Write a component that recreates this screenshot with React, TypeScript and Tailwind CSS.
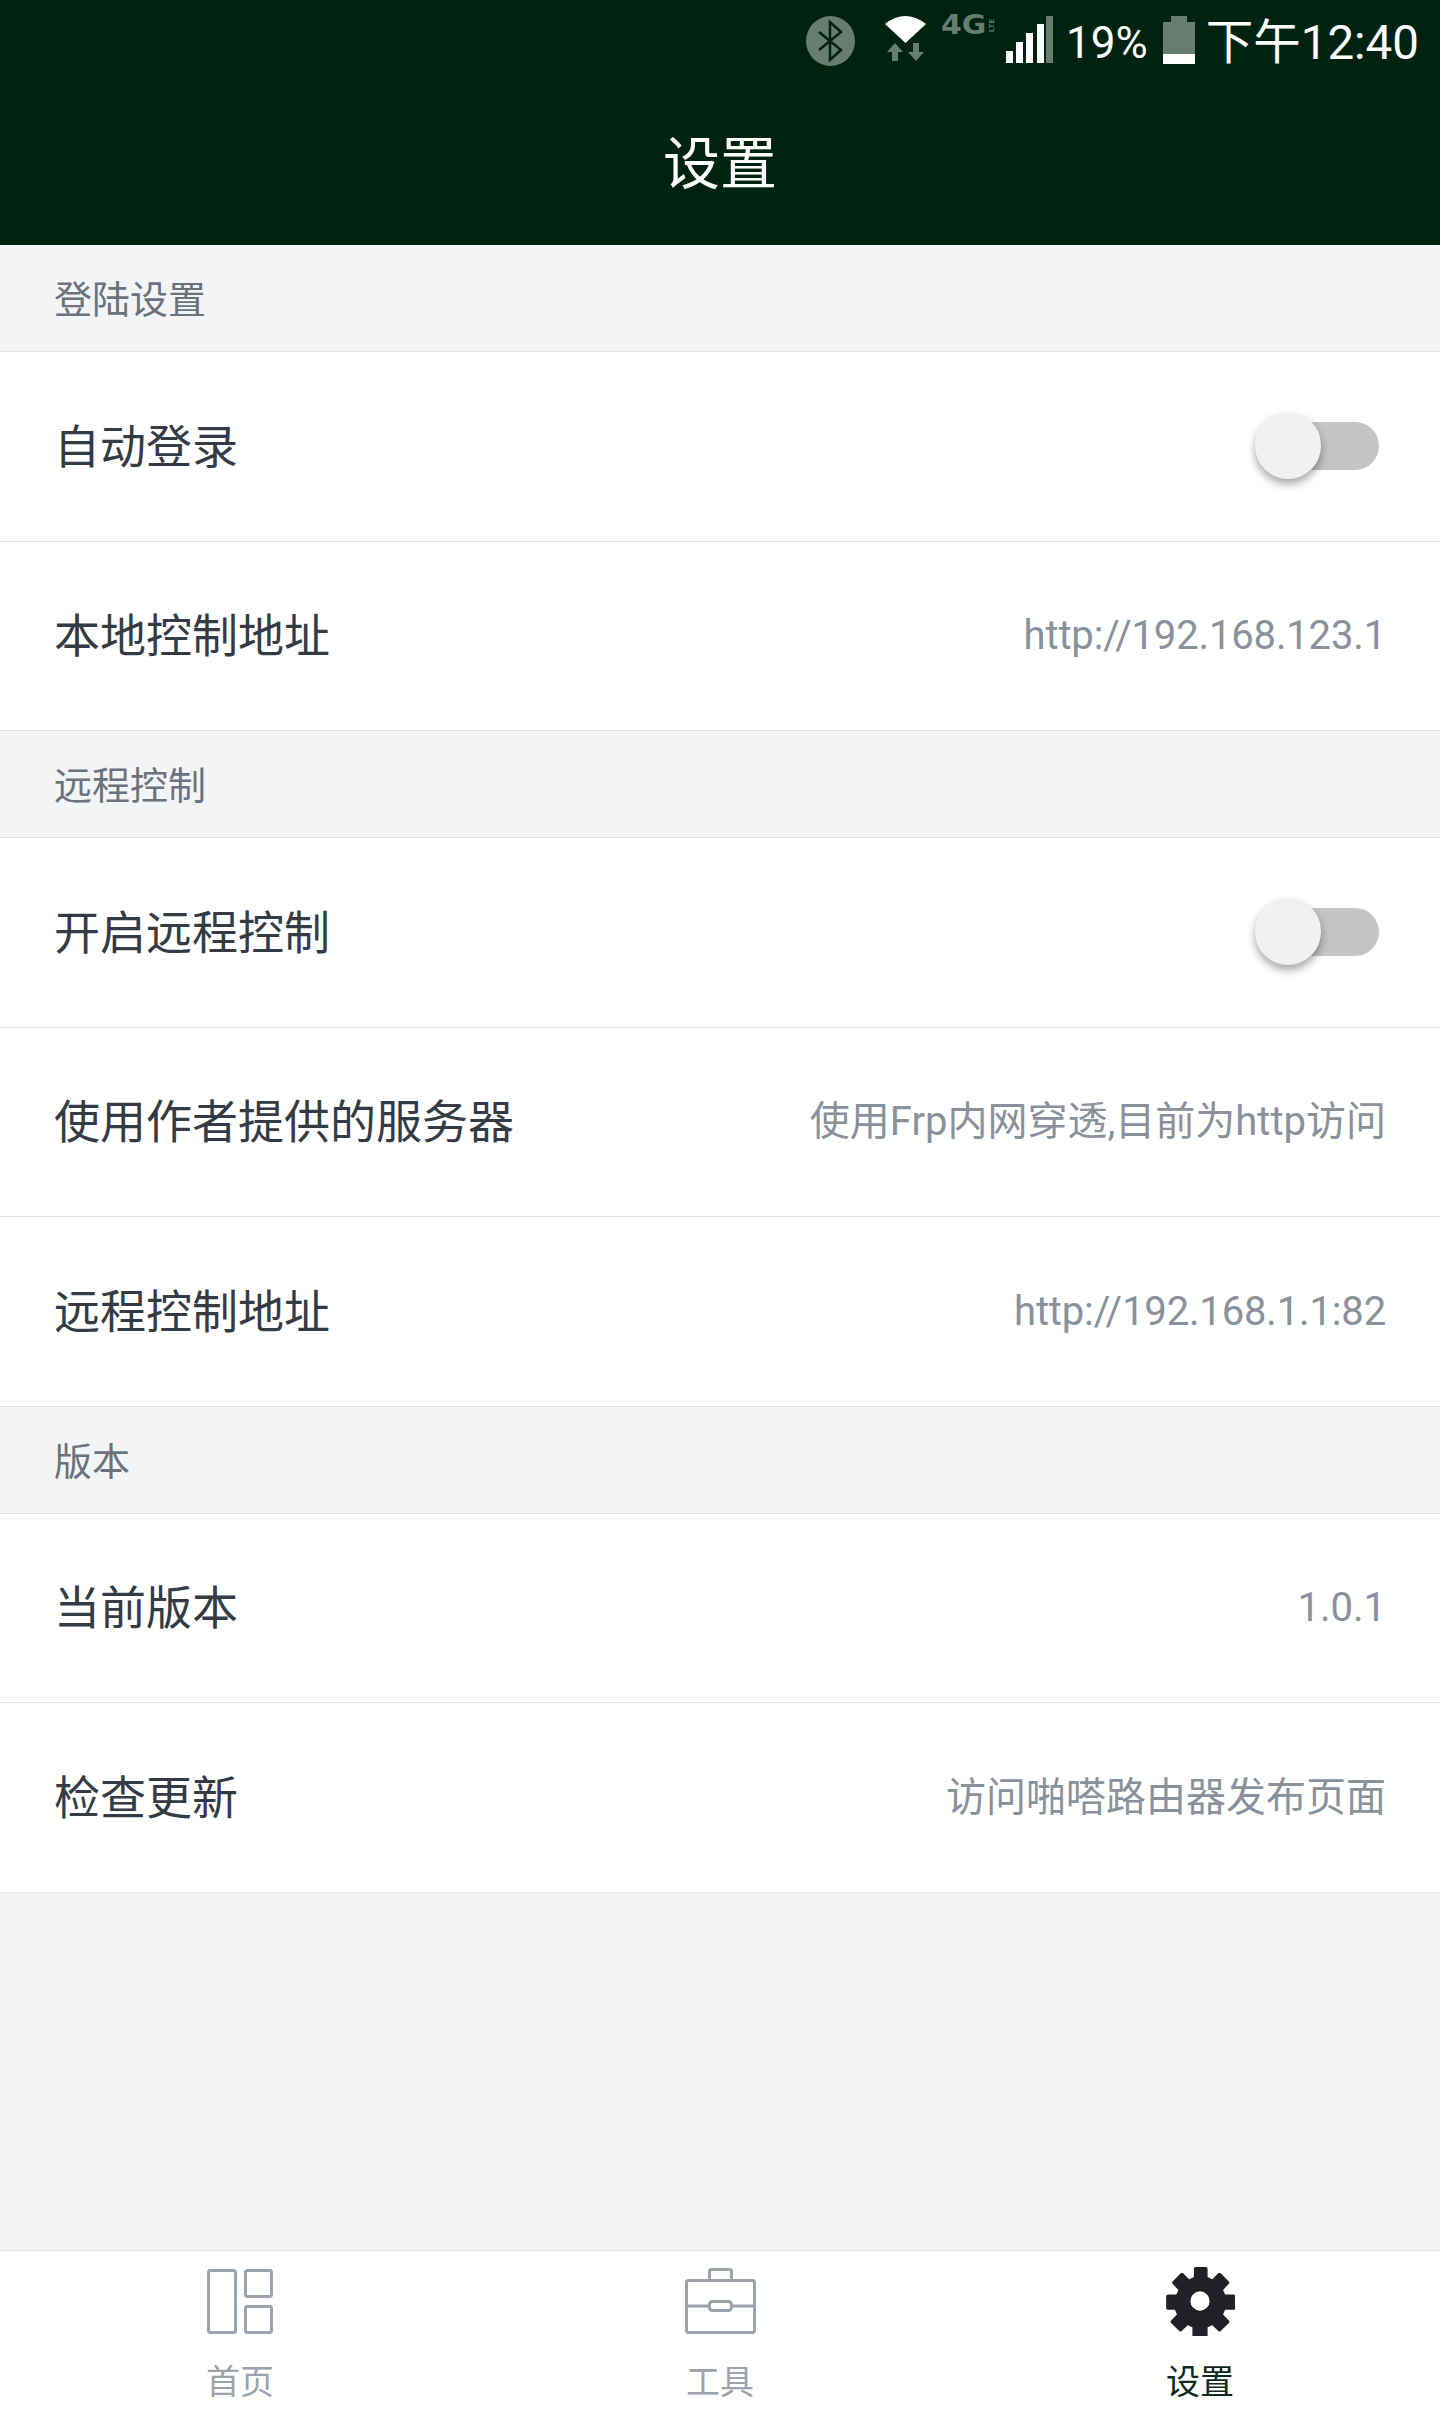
const font = "font-['Roboto','Noto_Sans_CJK_SC',sans-serif]";

type Row = { label: string; value?: string; toggle?: boolean; url?: boolean };
type Section = { title: string; rows: Row[] };

const sections: Section[] = [
  {
    title: "登陆设置",
    rows: [
      { label: "自动登录", toggle: true },
      { label: "本地控制地址", value: "http://192.168.123.1", url: true },
    ],
  },
  {
    title: "远程控制",
    rows: [
      { label: "开启远程控制", toggle: true },
      { label: "使用作者提供的服务器", value: "使用Frp内网穿透,目前为http访问" },
      { label: "远程控制地址", value: "http://192.168.1.1:82", url: true },
    ],
  },
  {
    title: "版本",
    rows: [
      { label: "当前版本", value: "1.0.1" },
      { label: "检查更新", value: "访问啪嗒路由器发布页面" },
    ],
  },
];

function Toggle() {
  return (
    <div className="relative mr-[6px] h-[48px] w-[124px]">
      <div className="absolute right-0 top-0 h-[48px] w-[100px] rounded-full bg-[#c4c4c4]" />
      <div className="absolute -top-[10px] left-0 h-[67px] w-[66px] rounded-full bg-[#f1f1f1] shadow-[0_5px_9px_rgba(0,0,0,0.35)]" />
    </div>
  );
}

function SettingRow({ row }: { row: Row }) {
  return (
    <div className="flex h-[189.5px] items-center justify-between border-b border-[#e1e2e4] bg-white pl-[54px] pr-[55px]">
      <span className="pt-[2px] text-[46px] text-[#353b44]">{row.label}</span>
      {row.toggle ? (
        <Toggle />
      ) : (
        <span className={`-mr-[1px] pt-[1px] text-[40px] text-[#8a919b] ${row.url ? "tracking-[-0.15px]" : ""}`}>{row.value}</span>
      )}
    </div>
  );
}

function StatusBar() {
  return (
    <div className="flex h-[84px] items-start justify-end pr-[21px] pt-[16px] text-white">
      <svg width="49" height="50" viewBox="0 0 49 50" className="mr-[30px]">
        <ellipse cx="24.5" cy="25" rx="24.5" ry="25" fill="#667d71" />
        <path d="M13 16 L35 34 L24 44 V6 L35 16 L13 34" fill="none" stroke="#002211" strokeWidth="2.5" />
      </svg>
      <svg width="41" height="45" viewBox="0 0 41 45" className="mr-[15px]">
        <path d="M0 8 Q20 -8 41 8 L20.500 27 Z" fill="#fff" />
        <path d="M10 27 L18 36 H13 V45 H7 V36 H2 Z M23 36 H28 V27 H34 V36 H39 L31 45 Z" fill="#667d71" />
      </svg>
      <div className="mr-[10px] flex h-[19px] w-[55px] items-center justify-between text-[#667d71]">
        <span className="origin-left scale-x-115 font-['DejaVu_Sans',sans-serif] text-[26px] font-bold leading-[19px]">4G</span>
        <span className="rotate-180 text-[8px] font-bold leading-[8px] [writing-mode:vertical-rl]">LTE</span>
      </div>
      <svg width="47" height="47" viewBox="0 0 47 47" className="mr-[13px]">
        <rect x="0" y="35" width="7" height="12" fill="#fff" />
        <rect x="10" y="26" width="7" height="21" fill="#fff" />
        <rect x="20" y="17" width="7" height="30" fill="#fff" />
        <rect x="31" y="8" width="7" height="39" fill="#fff" />
        <rect x="40" y="0" width="7" height="47" fill="#667d71" />
      </svg>
      <span className="mr-[15px] text-[44px] leading-[54px]">19%</span>
      <svg width="32" height="48" viewBox="0 0 32 48" className="mr-[11px]">
        <path d="M8 0 H24 V6 H32 V38 H0 V6 H8 Z" fill="#667d71" />
        <rect x="0" y="38" width="32" height="10" fill="#fff" />
      </svg>
      <span className="text-[47.5px] leading-[54px]">下午12:40</span>
    </div>
  );
}

function TabItem({ label, active, children }: { label: string; active?: boolean; children: React.ReactNode }) {
  return (
    <div className="flex flex-1 flex-col items-center">
      <div className="flex h-[78px] items-center justify-center">{children}</div>
      <span className={`mt-[22px] text-[34px] leading-[40px] ${active ? "text-[#0d2a1c]" : "text-[#9da3ac]"}`}>{label}</span>
    </div>
  );
}

export default function App() {
  return (
    <div className={`flex h-[2417px] w-[1440px] flex-col overflow-hidden bg-[#f3f4f6] ${font}`}>
      <div className="h-[245px] bg-[#002211]">
        <StatusBar />
        <div className="flex h-[161px] items-center justify-center text-[57px] text-white">设置</div>
      </div>
      <div className="flex-1">
        {sections.map((s) => (
          <div key={s.title}>
            <div className="flex h-[107px] items-center border-b border-[#e1e2e4] pl-[54px] pt-[5px] text-[38px] text-[#6b727b]">
              {s.title}
            </div>
            {s.rows.map((r) => (
              <SettingRow key={r.label} row={r} />
            ))}
          </div>
        ))}
      </div>
      <div className="flex h-[167px] border-t border-[#e1e2e4] bg-white pt-[11px]">
        <TabItem label="首页">
          <svg width="66" height="65" viewBox="0 0 66 65" fill="none" stroke="#9da3ac" strokeWidth="3">
            <rect x="1.500" y="1.500" width="27" height="62" rx="2" />
            <rect x="38.500" y="1.500" width="26" height="26" rx="2" />
            <rect x="38.500" y="37.500" width="26" height="26" rx="2" />
          </svg>
        </TabItem>
        <TabItem label="工具">
          <svg width="71" height="66" viewBox="0 0 71 66" fill="none" stroke="#9da3ac" strokeWidth="3">
            <rect x="1.500" y="12.500" width="68" height="52" rx="2" />
            <path d="M24.500 12 V3.500 Q24.500 1.500 26.500 1.500 H44.500 Q46.500 1.500 46.500 3.500 V12" />
            <path d="M2 38 H24 M47 38 H69" />
            <rect x="24.500" y="33.500" width="22" height="9" rx="3" />
          </svg>
        </TabItem>
        <TabItem label="设置" active>
          <svg width="70" height="70" viewBox="0 0 24 24" fill="#202124">
            <path d="M10 0.3h4a.6.6 0 0 1 .6.6v2.9l1.6.7 2.1-2a.6.6 0 0 1 .8 0l2.8 2.8a.6.6 0 0 1 0 .8l-2 2.1.7 1.6h2.9a.6.6 0 0 1 .6.6v4a.6.6 0 0 1-.6.6h-2.900l-.7 1.600 2 2.100a.6.6 0 0 1 0 .8l-2.800 2.800a.6.6 0 0 1-.8 0l-2.100-2-1.600.7v2.900a.6.6 0 0 1-.6.6h-4a.6.6 0 0 1-.6-.6v-2.900l-1.600-.7-2.100 2a.6.6 0 0 1-.8 0l-2.800-2.800a.6.6 0 0 1 0-.8l2-2.100-.7-1.600H1a.6.6 0 0 1-.6-.6v-4a.6.6 0 0 1 .6-.6h2.900l.7-1.600-2-2.100a.6.6 0 0 1 0-.8l2.800-2.800a.6.6 0 0 1 .8 0l2.100 2 1.600-.7V.9a.6.6 0 0 1 .6-.6zM12 8.700a3.300 3.300 0 1 0 0 6.600 3.300 3.300 0 0 0 0-6.600z" fillRule="evenodd" />
          </svg>
        </TabItem>
      </div>
    </div>
  );
}
